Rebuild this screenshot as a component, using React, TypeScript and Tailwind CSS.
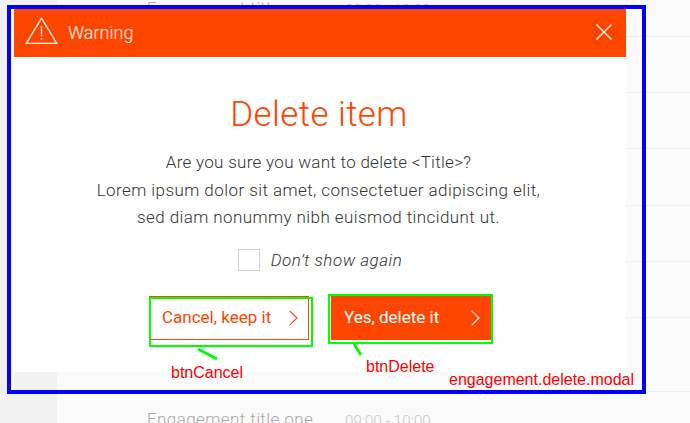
import React from "react";

const rows = ["h-[37px]", "h-[56px]", "h-[56px]", "h-[57px]", "h-[56px]", "h-[56px]", "h-[74px]"];

function Schedule() {
  return (
    <div className="flex h-[423px] w-[690px]">
      <div className="w-[57px] shrink-0 bg-[#f2f2f2]" />
      <div className="flex flex-1 flex-col bg-[#fafafa]">
        {rows.map((height, i) => (
          <div key={i} className={`${height} shrink-0 border-b border-[#eeeeee]`}>
            {i === 0 && <EngagementRow className="-mt-[3px]" />}
          </div>
        ))}
        <EngagementRow className="mt-[16px]" />
      </div>
    </div>
  );
}

function EngagementRow({ className }: { className: string }) {
  return (
    <div className={`flex pl-[90px] leading-[22px] whitespace-nowrap ${className}`}>
      <span className="w-[198px] text-[17px] font-light tracking-[0.42px] text-[#a9a9a9]">Engagement title one</span>
      <span className="pt-[2px] text-[15px] leading-[22px] font-light tracking-[0.1px] text-[#c8c8c8]">09:00 - 10:00</span>
    </div>
  );
}

function Chevron() {
  return (
    <svg width="9" height="16" viewBox="0 0 9 16" fill="none" stroke="currentColor" strokeWidth="1.1">
      <path d="M.7.9 8 8 .7 15.1" />
    </svg>
  );
}

function Modal() {
  return (
    <section className="absolute top-[9px] left-[14px] flex h-[363px] w-[612px] flex-col bg-white">
      <header className="flex h-12 shrink-0 items-center bg-[#ff4600] pr-[14px] pl-[11px] text-white">
        <svg width="33" height="28" viewBox="0 0 33 28" fill="none" stroke="currentColor" strokeWidth="1.25" className="-mt-[5px]">
          <path d="M16.5 1.2 31.8 26.4H1.2Z" />
          <path d="M16.5 9v10.5M16.5 21v2" />
        </svg>
        <span className="-mt-px ml-[10px] text-[18px] leading-6 font-light">Warning</span>
        <svg width="16" height="16" viewBox="0 0 16 16" fill="none" stroke="currentColor" strokeWidth="1.3" className="-mt-[2px] ml-auto">
          <path d="m.5.5 15 15M15.5.5l-15 15" />
        </svg>
      </header>
      <div className="flex flex-col items-center pr-[3px] whitespace-nowrap text-[#333333]">
        <h1 className="mt-[37px] pl-px text-[35px] leading-[42px] font-light tracking-[0.4px] text-[#ff4600]">Delete item</h1>
        <div className="mt-[13px] flex flex-col items-center text-[17px] leading-[27.7px] font-light">
          <p className="tracking-[0.29px]">Are you sure you want to delete &lt;Title&gt;?</p>
          <p className="tracking-[0.43px]">Lorem ipsum dolor sit amet, consectetuer adipiscing elit,</p>
          <p className="tracking-[0.41px]">sed diam nonummy nibh euismod tincidunt ut.</p>
        </div>
        <label className="mt-[17px] flex h-[22px] items-center pl-[3px]">
          <span className="size-[22px] border border-[#d4d4d4]" />
          <span className="ml-[11px] text-[17px] leading-[22px] font-light tracking-[0.5px] italic">Don’t show again</span>
        </label>
      </div>
      <div className="mt-[25px] flex pl-[135px] whitespace-nowrap">
        <button className="flex h-11 w-[160px] items-center justify-between border border-[#ff4600] pr-[10px] pl-3 text-[#ff4600]">
          <span className="text-[17px]">Cancel, keep it</span>
          <Chevron />
        </button>
        <button className="ml-[22px] flex h-11 w-[160px] items-center justify-between bg-[#ff4600] pr-[11px] pl-[13px] text-white">
          <span className="text-[17px]">Yes, delete it</span>
          <Chevron />
        </button>
      </div>
    </section>
  );
}

function Annotations() {
  return (
    <div className="font-['Liberation_Sans',Arial,sans-serif] text-[16px] leading-[18px] whitespace-nowrap text-[#ff0000]">
      <div className="absolute top-[5px] left-[7px] h-[389px] w-[639px] border-4 border-[#0000ff]" />
      <div className="absolute top-[297px] left-[149px] h-[50px] w-[164px] border-2 border-[#00ff00]" />
      <div className="absolute top-[294px] left-[328px] h-[50px] w-[165px] border-2 border-[#00ff00]" />
      <svg className="absolute top-[340px] left-[190px]" width="180" height="24" fill="none" stroke="#00ff00" strokeWidth="3">
        <path d="m8 9 19 10M164 4l7 11" />
      </svg>
      <span className="absolute top-[364px] left-[171px]">btnCancel</span>
      <span className="absolute top-[358px] left-[366px]">btnDelete</span>
      <span className="absolute top-[371px] left-[449px]">engagement.delete.modal</span>
    </div>
  );
}

export default function App() {
  return (
    <main className="relative h-[423px] w-[690px] overflow-hidden font-[Roboto,sans-serif]">
      <Schedule />
      <div className="absolute top-[9px] left-[11px] h-[381px] w-[3px] bg-white" />
      <Modal />
      <Annotations />
    </main>
  );
}
